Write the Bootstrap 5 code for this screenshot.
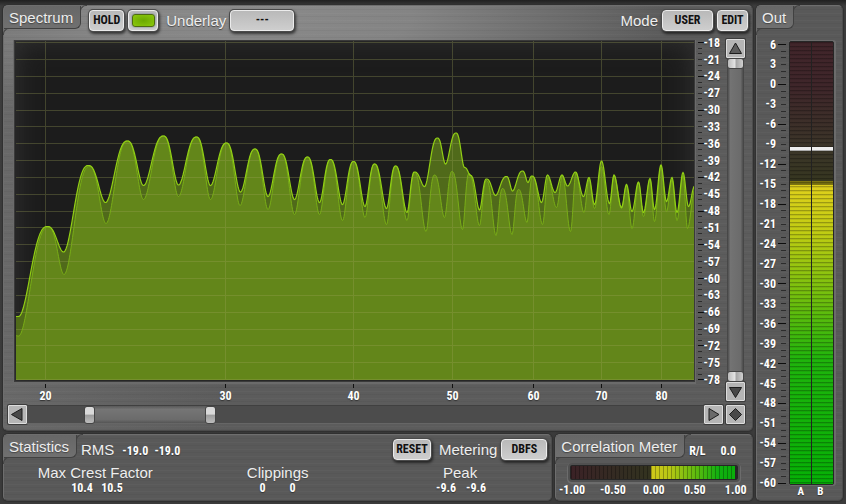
<!DOCTYPE html>
<html lang="en">
<head>
<meta charset="utf-8">
<meta name="viewport" content="width=device-width, initial-scale=1">
<title>Spectrum Analyzer</title>
<link href="https://cdn.jsdelivr.net/npm/bootstrap@5.3.0/dist/css/bootstrap.min.css" rel="stylesheet">
<style>
:root{--narrow:"Liberation Sans Narrow","Roboto Condensed","Roboto",sans-serif}
body{background:#3b3b3b linear-gradient(#202020,#3d3d3d 6px,#3b3b3b);color:#fff;font-family:"Liberation Sans",Arial,sans-serif;font-size:15px;line-height:18px;padding:5px 3px 3px;gap:3px;overflow-x:hidden}
.left-side{gap:3px}
.panel{border-radius:5px;border:1px solid #6e6e6e;border-right-color:#4c4c4c;border-bottom-color:#4a4a4a;
 background:repeating-linear-gradient(rgba(255,255,255,.025) 0 1px,transparent 1px 3px,rgba(0,0,0,.04) 3px 4px,transparent 4px 7px),#595959;box-shadow:0 0 1px 1px #303030}
.panel-spectrum{background:repeating-linear-gradient(rgba(255,255,255,.025) 0 1px,transparent 1px 3px,rgba(0,0,0,.04) 3px 4px,transparent 4px 7px),radial-gradient(ellipse 420px 110px at 240px 10px,#8a8a8a,#848484 40%,rgba(96,96,96,0)),linear-gradient(90deg,#696969,#5c5c5c 30%);padding-bottom:6px}
.tab{position:relative;height:23px;line-height:23px;padding:0 7px 0 5px;color:#ededed;background:linear-gradient(#676767,#707070);border-right:1px solid #414141;border-bottom:1px solid #414141;border-radius:4px 0 6px 0;text-shadow:0 1px 1px #444;margin:0;font-size:15px;font-weight:400;white-space:nowrap}
.tab::before,.tab::after{content:"";position:absolute;width:7px;height:7px;border-top:1px solid #414141;border-left:1px solid #414141;border-radius:6px 0 0 0}
.tab::before{left:-1px;top:22px}
.tab::after{left:100%;top:-1px}
.cap{color:#eee;text-shadow:0 1px 1px #444;white-space:nowrap}
.num{font:bold 12px/14px var(--narrow);text-shadow:0 1px 1px #333;white-space:nowrap}
.key{height:21px;padding:0;border:1px solid #ececec;border-radius:4px;background:linear-gradient(#b9b9b9,#cecece);box-shadow:0 0 0 1px #4a4a4a,1px 2px 3px 1px rgba(0,0,0,.6);color:#111;font:bold 12px/19px var(--narrow);text-align:center;text-align-last:center;appearance:none}
.led{display:block;width:23px;height:13px;margin:auto;border:1px solid #4e6b10;border-radius:3px;background:radial-gradient(#6ba800,#8cc90c);box-shadow:0 0 2px #567}
.w-hold{width:35px}.w-led{width:30px}.w-under{width:64px}.w-user{width:51px}.w-edit{width:31px}.w-reset{width:38px}.w-dbfs{width:46px}
.top-row{height:33px}
.top-row .key{margin-top:4px}
.top-row .cap{margin-top:6px}
.work{padding:0 7px 0 4px;gap:3px}
.plot{background:#1c1c1c;box-shadow:inset 0 0 26px #343434,0 0 0 1px #3a3a3a,0 1px 0 2px #6b6b6b;margin-left:7px;min-height:180px}
.plot-row{padding-top:2px}
.db-scale{width:29px}
.axis{height:24px;margin:0 29px 0 7px}
svg{display:block;overflow:visible}
svg text{fill:#fff;font:bold 12px var(--narrow);text-shadow:0 1px 1px #333}
.step{width:19px;height:19px;padding:0;border:1px solid #ddd;border-radius:1px;background:#b5b5b5;box-shadow:0 0 0 1px #3c3c3c;flex:none}
.step svg{width:15px;height:15px;margin:auto}
.rail{position:relative;background:#4c4c4c;border-top:1px solid #404040;border-bottom:1px solid #666}
.rail.vert{border:0;background:linear-gradient(90deg,#404040,#737373 20%,#6b6b6b 80%,#404040);margin:0 1px}
.rail-fill{position:absolute;top:0;bottom:0;background:linear-gradient(#595959,#757575 20%,#6b6b6b 80%,#555)}
.rail input{position:absolute;inset:0;width:100%;height:100%;margin:0;appearance:none;background:none;pointer-events:none}
.rail input::-webkit-slider-thumb{appearance:none;pointer-events:auto;width:11px;height:18px;border:1px solid #454545;border-radius:3px;background:linear-gradient(#d9d9d9 45%,#9b9b9b 50%,#bdbdbd)}
.rail.vert input{writing-mode:vertical-lr}
.rail.vert input::-webkit-slider-thumb{width:17px;height:11px;background:linear-gradient(90deg,#bbb,#e6e6e6 48%,#a2a2a2 52%,#d0d0d0)}
.lower{gap:3px}
.stats{flex:551 1 0;min-height:67px}
.corr{flex:197 1 0}
.stat-top{height:26px}
.stat-top .key{margin-top:4px}
.stat-top .cap{margin-top:6px}
.stat-top .num{margin-top:9px}
.corr .stat-top .num{margin-top:9px}
.figures{gap:12px}
.figures .num{width:18px;text-align:center}
.rms{gap:6px}
.stat-col{margin-top:3px}
.stat-col .cap{line-height:18px}
.stat-col .num{line-height:14px;margin-top:-1px}
.corr-box{margin:4px 14px 0 14px}
.corr-bar{height:15px;border:1px solid #262626;border-right-width:3px;border-radius:2px;box-shadow:0 0 0 2px #505050,0 1px 0 3px #6c6c6c;
 background:repeating-linear-gradient(90deg,rgba(0,0,0,.28) 0 1px,transparent 1px 4px),linear-gradient(90deg,#3b2226,#332c22 30%,#33331f 49%,#d0c71a 49%,#b8c714 60%,#5fbb0e 76%,#10b010 90%,#0aac0a)}
.corr-scale{height:20px;margin:0 2px}
.out{width:87px}
.out-body{padding:12px 8px 0 0}
.out-scale{width:32px}
.out-meter{flex:1;border:1px solid #262626;border-radius:2px;background:#222;box-shadow:1px 0 0 1px #6b6b6b;gap:1px}
.strip{position:relative;flex:1;background:repeating-linear-gradient(rgba(0,0,0,.26) 0 1px,rgba(0,0,0,.08) 1px 2px,transparent 2px 4px),linear-gradient(#41252a,#3f262a 10%,#3b3628 25%,#363620 31.4%,#7c7410 31.4%,#7c7410 32.3%,#e0d01c 32.3%,#c0cc13 43%,#70be0d 58%,#1fb40c 72%,#06b006)}
.peak{position:absolute;left:0;right:0;height:4px;background:#eee;border-bottom:1px solid #aaa}
.out-foot{margin:0 12px 0 34px;height:15px}
.out-foot .num{font-size:11px}
</style>
</head>
<body class="d-flex min-vh-100">
<main class="left-side d-flex flex-column flex-grow-1">
  <section class="panel panel-spectrum d-flex flex-column flex-grow-1">
    <header class="top-row d-flex align-items-start">
      <h1 class="tab">Spectrum</h1>
      <div class="d-flex flex-grow-1 align-items-start ps-2">
        <button class="key w-hold me-1" type="button">HOLD</button>
        <button class="key w-led me-2" type="button" aria-label="Display on"><span class="led"></span></button>
        <label class="cap me-1" for="underlay">Underlay</label>
        <select class="key w-under" id="underlay"><option>---</option></select>
        <label class="cap ms-auto me-1" for="mode">Mode</label>
        <select class="key w-user me-1" id="mode"><option>USER</option></select>
        <button class="key w-edit me-1" type="button">EDIT</button>
      </div>
    </header>
    <div class="work d-flex flex-grow-1">
      <div class="d-flex flex-column flex-grow-1">
        <div class="plot-row d-flex flex-grow-1">
          <div class="plot flex-grow-1 position-relative">
            <svg id="plot" class="position-absolute w-100 h-100" viewBox="15 40 679 340" preserveAspectRatio="none" role="img" aria-label="Spectrum curve"></svg>
          </div>
          <div class="db-scale position-relative"><svg id="dbScale" class="position-absolute" width="100%" height="100%"></svg></div>
        </div>
        <div class="axis"><svg id="axis" width="100%" height="24"></svg></div>
        <div class="d-flex">
          <button class="step" type="button" aria-label="Left"><svg viewBox="0 0 15 15"><path d="M12 1.500V13.500L1.500 7.500Z" fill="#484848" stroke="#1d1d1d"/></svg></button>
          <div class="rail flex-grow-1">
            <div class="rail-fill" style="left:9%;right:72.500%"></div>
            <input type="range" min="0" max="1000" value="85" aria-label="Lowest frequency">
            <input type="range" min="0" max="1000" value="268" aria-label="Highest frequency">
          </div>
          <button class="step" type="button" aria-label="Right"><svg viewBox="0 0 15 15"><path d="M3 1.500V13.500L13 7.500Z" fill="#6a6a6a" stroke="#1d1d1d"/></svg></button>
        </div>
      </div>
      <div class="d-flex flex-column">
        <button class="step" type="button" aria-label="Up"><svg viewBox="0 0 15 15"><path d="M1.500 12.500H13.500L7.500 2Z" fill="#5c5c5c" stroke="#1d1d1d"/></svg></button>
        <div class="rail vert flex-grow-1">
          <input type="range" min="0" max="100" value="0" aria-label="Upper level">
          <input type="range" min="0" max="100" value="100" aria-label="Lower level">
        </div>
        <button class="step" type="button" aria-label="Down"><svg viewBox="0 0 15 15"><path d="M1.500 3.500H13.500L7.500 13.500Z" fill="#484848" stroke="#1d1d1d"/></svg></button>
        <button class="step mt-1" type="button" aria-label="Reset view"><svg viewBox="0 0 15 15"><path d="M7.500 1.500L13.500 7.500L7.500 13.500L1.500 7.500Z" fill="#484848" stroke="#1d1d1d"/></svg></button>
      </div>
    </div>
  </section>

  <div class="lower d-flex">
    <section class="panel stats">
      <header class="stat-top d-flex align-items-start">
        <h2 class="tab">Statistics</h2>
        <span class="cap ms-1">RMS</span>
        <div class="rms d-flex ms-2"><span class="num">-19.0</span><span class="num">-19.0</span></div>
        <button class="key w-reset ms-auto" type="button">RESET</button>
        <label class="cap ms-2 me-1" for="metering">Metering</label>
        <select class="key w-dbfs me-1" id="metering"><option>DBFS</option></select>
      </header>
      <div class="row g-0 text-center">
        <div class="col stat-col"><div class="cap">Max Crest Factor</div><div class="figures d-flex justify-content-center"><span class="num">10.4</span><span class="num">10.5</span></div></div>
        <div class="col stat-col"><div class="cap">Clippings</div><div class="figures d-flex justify-content-center"><span class="num">0</span><span class="num">0</span></div></div>
        <div class="col stat-col"><div class="cap">Peak</div><div class="figures d-flex justify-content-center"><span class="num">-9.6</span><span class="num">-9.6</span></div></div>
      </div>
    </section>
    <section class="panel corr">
      <header class="stat-top d-flex align-items-start">
        <h2 class="tab">Correlation Meter</h2>
        <span class="num ms-1">R/L</span>
        <span class="num ms-auto me-3">0.0</span>
      </header>
      <div class="corr-box">
        <div class="corr-bar"></div>
        <div class="corr-scale"><svg id="corrScale" width="100%" height="20"></svg></div>
      </div>
    </section>
  </div>
</main>

<aside class="panel out d-flex flex-column">
  <div class="d-flex"><h2 class="tab">Out</h2></div>
  <div class="out-body d-flex flex-grow-1">
    <div class="out-scale position-relative"><svg id="outScale" class="position-absolute" width="100%" height="100%"></svg></div>
    <div class="out-meter d-flex">
      <div class="strip"><div class="peak" style="top:23.800%"></div></div>
      <div class="strip"><div class="peak" style="top:23.800%"></div></div>
    </div>
  </div>
  <div class="out-foot d-flex justify-content-around"><span class="num">A</span><span class="num">B</span></div>
</aside>

<script src="https://cdn.jsdelivr.net/npm/bootstrap@5.3.0/dist/js/bootstrap.bundle.min.js"></script>
<script>
// Alternating valleys and crests of the two traces, as x,y pairs
const held = [[14,315],[18,315],[47,225],[63,250.5],[88,164],[105,201],[127,139.5],[143,184],[163,134.5],[178,183.5],[196,135.5],[210,184],[226,141.5],[240,190.5],[254.5,147.5],[267.5,195],[281,152.5],[294,198],[307,155.5],[319,201],[330,158],[342,203],[353,160],[364.5,205],[374,162.5],[386,207],[395,164.5],[406.5,211],[414,170.5],[424,185],[437,136.5],[445,162.5],[455.5,131.5],[464,166],[470,174],[479,208.5],[486,177.5],[495,194],[506,175],[512,189.5],[522,169.5],[527.5,181],[531.5,174.5],[541,201],[547,173.5],[554.5,191],[561.5,173.5],[567,184.5],[575,170.5],[583,195],[588.5,176],[594,203],[601,159.5],[609,202],[613.5,173.5],[621,206],[626,183],[631.5,210],[638,180.5],[643,211],[649.5,177],[654,208],[660.5,163.5],[666,200],[671.5,176],[676.5,211],[682.5,171],[688,205],[694,185]];
const live = [[14,334],[18,334.5],[48,225.5],[63.5,273],[89,165],[105.5,222],[127,139.5],[143,198],[163,134.5],[178,195],[196,135.5],[210,198],[226,141.5],[239.5,204],[254.5,147.5],[267.5,208],[281,152.5],[294,213],[307,155.5],[319,213],[330,158],[342,219],[353,160],[364.5,216],[374,162.5],[386,223],[395,164.5],[406.5,219],[414,171],[425.5,230],[434,173.5],[444,216],[451.5,170],[462,228],[468.5,172],[479,224],[486,179],[495.5,234],[502,187],[511.5,233],[518,188],[526.5,221],[532,175],[542,223],[547.5,176],[556,206],[562,174],[570,230],[575.5,171],[583.5,211],[588.5,178],[594,207],[601,165],[608.5,213],[613.5,174],[621,207],[626,184],[631.5,227],[638,181],[643,215],[649.5,178],[654,220],[660.5,165],[666,210],[671.5,178],[676.5,219],[682.5,174],[687,227],[694,190]];
function trace(pts){
  const out = [];
  for (let i = 0; i < pts.length - 1; i++){
    const [x0,y0] = pts[i], [x1,y1] = pts[i+1];
    const rising = y1 < y0, crest = Math.min(y0,y1), valley = Math.max(y0,y1);
    const power = x0 > 535 ? 1 : 1.25;
    for (let x = x0; x < x1; x += .5){
      const t = (x - x0) / (x1 - x0), u = rising ? 1 - t : t;
      const v = (1 + Math.cos(Math.PI * Math.pow(u, power))) / 2;
      out.push((x + .5).toFixed(1) + ' ' + (valley - (valley - crest) * v + .5).toFixed(1));
    }
  }
  out.push(pts[pts.length-1].join(' '));
  return out.join('L');
}
const a = trace(held), b = trace(live);
const freqs = [[20,45],[30,225],[40,353],[50,452],[60,533],[70,601],[80,661]];
let grid = '';
for (let i = 0; i <= 20; i++) grid += `M15 ${Math.floor(41.6 + i * 16.85) + .5}H694`;
for (const f of freqs) grid += `M${f[1] + .5} 40V380`;
document.getElementById('plot').innerHTML =
  `<clipPath id="frame"><rect x="16" y="40" width="678" height="339"/></clipPath><g clip-path="url(#frame)">
  <path d="M${a}V380H14Z" fill="#506a1a"/><path d="M${b}V380H14Z" fill="#63861a"/>
  <path d="${grid}" stroke="#a0a55a" stroke-opacity=".3" fill="none" shape-rendering="crispEdges"/>
  <path d="M${b}" fill="none" stroke="#79ad17"/><path d="M${a}" fill="none" stroke="#91cf14" stroke-width="1.2"/></g>`;

// Vertical level scale: a tick per dB, a longer one every 6 dB, a label every 3 dB
function levels(id, top, count, first, last, textX, major, minor, right){
  let s = '';
  for (let i = 0; i <= count; i++){
    const db = top - i, y = first + (last - first) * i / count;
    const w = db % 6 ? minor : major, x = right[0], back = right[1];
    const x1 = back ? x - w : x, x2 = back ? x : x + w;
    s += `<line x1="${x1}" x2="${x2}" y1="${y}%" y2="${y}%" stroke="${db % 6 ? '#2c2c2c' : '#0d0d0d'}" shape-rendering="crispEdges"/>`;
    if (db % 3 === 0) s += `<text x="${textX}" y="${y}%" dy="4" text-anchor="end">${db}</text>`;
  }
  document.getElementById(id).innerHTML = s;
}
levels('dbScale', -18, 60, .5, 99.6, 26, 7, 4, [4, false]);
levels('outScale', 6, 66, .8, 99.6, 19, 8, 5, [29, true]);

document.getElementById('axis').innerHTML = freqs.map(f => {
  const p = (f[1] + .5 - 15) / 6.79;
  return `<line x1="${p}%" x2="${p}%" y1="3" y2="7" stroke="#111"/><text x="${p}%" y="19" text-anchor="middle">${f[0]}</text>`;
}).join('');
document.getElementById('corrScale').innerHTML = ['-1.00','-0.50','0.00','0.50','1.00'].map((t, i) =>
  `<text x="${i * 25}%" y="14" text-anchor="middle">${t}</text>`).join('');
</script>
</body>
</html>
